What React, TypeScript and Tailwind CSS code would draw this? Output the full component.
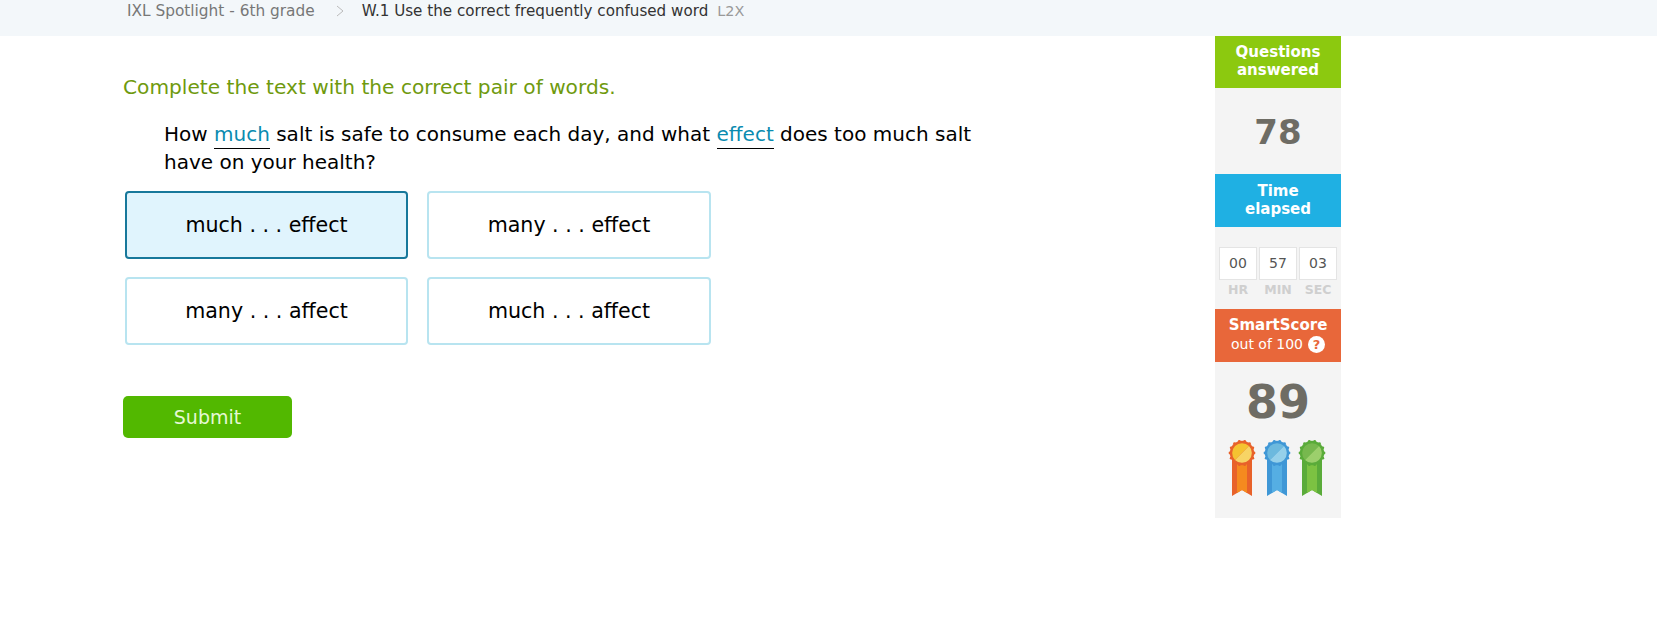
import React from 'react';

const choices = ['much . . . effect', 'many . . . effect', 'many . . . affect', 'much . . . affect'];

const Ribbon = ({ dark, mid, light, pale }: { dark: string; mid: string; light: string; pale: string }) => {
  const teeth = Array.from({ length: 14 }, (_, i) => (i * 360) / 14);
  return (
    <svg width="28" height="58" viewBox="0 0 28 58">
      <path d="M4 16 H24 V57 L14 51 L4 57 Z" fill={dark} />
      <path d="M9 16 H19 V54 L14 51 L9 54 Z" fill={mid} />
      {teeth.map((a) => (
        <circle key={a} cx={14 + 12 * Math.cos((a * Math.PI) / 180)} cy={14 + 12 * Math.sin((a * Math.PI) / 180)} r="1.4" fill={dark} />
      ))}
      <circle cx="14" cy="14" r="12.2" fill={dark} />
      <path d="M7 21 A9.9 9.9 0 0 1 21 7 Z" fill={light} />
      <path d="M21 7 A9.9 9.9 0 0 1 7 21 Z" fill={pale} />
    </svg>
  );
};

const TimeCell = ({ value, label }: { value: string; label: string }) => (
  <div className="flex flex-col items-center">
    <div className="w-[38px] h-[33px] bg-white border border-[#e4e4e4] flex items-center justify-center text-[14px] text-[#555]">{value}</div>
    <span className="mt-[2px] text-[12.5px] leading-[16px] font-bold text-[#cfcfcf]">{label}</span>
  </div>
);

export default function App() {
  return (
    <div className="w-[1657px] h-[625px] bg-white overflow-hidden font-['DejaVu_Sans',sans-serif]">
      <div className="h-9 bg-[#f3f7fa] flex items-start pl-[127px] pt-[1px] leading-[20px]">
        <span className="text-[#777] text-[15.35px]">IXL Spotlight - 6th grade</span>
        <svg className="ml-[21px] mr-[18px] mt-[4px]" width="8" height="12" viewBox="0 0 8 12" fill="none" stroke="#bbb" strokeWidth="1">
          <path d="M1 1 L7 6 L1 11" />
        </svg>
        <span className="text-[#333] text-[15.15px]">W.1 Use the correct frequently confused word</span>
        <span className="ml-[9px] text-[#999] text-[14.4px]">L2X</span>
      </div>

      <div className="flex">
        <div className="w-[1215px] pl-[123px]">
          <div className="pt-[37px] text-[20.17px] leading-[28px] text-[#6f9a0e]">Complete the text with the correct pair of words.</div>
          <p className="ml-[41px] mt-[19px] w-[820px] text-[20px] leading-[28px] text-black">
            How <span className="text-[#0a8bb0] border-b border-black pb-[2px]">much</span> salt is safe to consume each day, and what{' '}
            <span className="text-[#0a8bb0] border-b border-black pb-[2px]">effect</span> does too much salt have on your health?
          </p>
          <div className="ml-[2px] mt-[15px] grid grid-cols-[283px_284px] gap-x-[19px] gap-y-[18px] w-[587px]">
            {choices.map((c, i) => (
              <div
                key={c}
                className={
                  i === 0
                    ? 'h-[68px] rounded-[4px] border-2 border-[#17789b] bg-[#e0f4fd] flex items-center justify-center text-[20.6px] text-black'
                    : 'h-[68px] rounded-[4px] border-2 border-[#b8e4f0] bg-white flex items-center justify-center text-[20.6px] text-black'
                }
              >
                {c}
              </div>
            ))}
          </div>
          <button className="mt-[51px] w-[169px] h-[42px] rounded-[5px] bg-[#52b800] text-[#e6f8d4] text-[19px] flex items-center justify-center">Submit</button>
        </div>

        <div className="w-[126px] h-[482px] bg-[#f4f4f4] flex flex-col">
          <div className="h-[52px] bg-[#8cc90f] text-white font-bold text-[15px] leading-[18px] text-center pt-[7px]">Questions<br />answered</div>
          <div className="h-[86px] pt-[2px] flex items-center justify-center text-[34px] font-bold text-[#6e6c64]">78</div>
          <div className="h-[53px] bg-[#1fb0e3] text-white font-bold text-[15px] leading-[18px] text-center pt-[8px]">Time<br />elapsed</div>
          <div className="h-[82px] flex justify-center gap-[2px] pt-[20px]">
            <TimeCell value="00" label="HR" />
            <TimeCell value="57" label="MIN" />
            <TimeCell value="03" label="SEC" />
          </div>
          <div className="h-[53px] bg-[#e8673a] text-white text-center pt-[7px]">
            <div className="font-bold text-[15px] leading-[18px]">SmartScore</div>
            <div className="pt-[1px] text-[14px] leading-[19px] flex items-center justify-center gap-[5px]">
              out of 100
              <span className="w-[17px] h-[17px] rounded-full bg-white text-[#e8673a] text-[13px] font-bold leading-[17px]">?</span>
            </div>
          </div>
          <div className="h-[77px] pt-[3px] flex items-center justify-center text-[46px] font-bold text-[#6e6c64]">89</div>
          <div className="flex justify-center gap-[7px] pr-[2px]">
            <Ribbon dark="#e8622a" mid="#f58a1f" light="#f5c330" pale="#f7d465" />
            <Ribbon dark="#3f97d6" mid="#55aee3" light="#6cb9de" pale="#95d0ea" />
            <Ribbon dark="#5aab3a" mid="#7cc242" light="#77b84e" pale="#9ccf6c" />
          </div>
        </div>
      </div>
    </div>
  );
}
